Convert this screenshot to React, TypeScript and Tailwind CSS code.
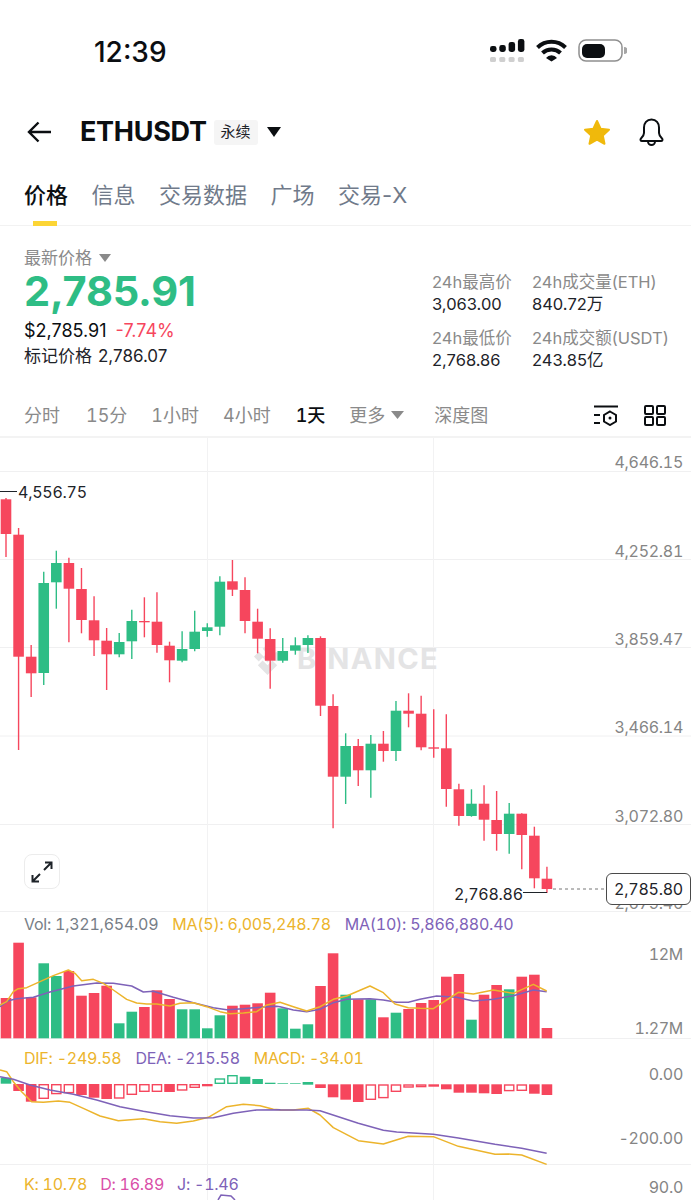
const RED = "#f6465d";
const GREEN = "#2ebd85";
const YELLOW = "#ecb42c";
const PURPLE = "#7e62b8";

const candleX = (i: number) => 6 + 12.58 * i;

// [bodyTop, bodyBottom, wickTop, wickBottom, up]
const candles: [number, number, number, number, boolean][] = [
  [499.3, 534, 498, 557, false],
  [534.7, 656.7, 528, 750, false],
  [656.7, 673.3, 645, 697, false],
  [583, 673, 571.7, 685, true],
  [563, 582.3, 550.7, 608.7, true],
  [563, 588.7, 557.7, 642.3, false],
  [589, 620, 568, 633.3, false],
  [620.3, 640.3, 596.3, 656, false],
  [640.7, 654.3, 628, 690, false],
  [642, 654.3, 633, 657.3, true],
  [621, 641.3, 609.7, 659, true],
  [621, 622.3, 597.3, 637.3, false],
  [621.7, 645, 592.3, 652.7, false],
  [645.7, 660.3, 641.7, 682.3, false],
  [649, 660.7, 631.3, 662.3, true],
  [631.7, 649, 610.7, 651.3, true],
  [627.3, 631, 623.3, 636.7, true],
  [581.7, 626.7, 576.3, 635.3, true],
  [581.3, 589.7, 560, 596, false],
  [590, 621, 577.3, 633.3, false],
  [621.7, 638.7, 608.7, 653.3, false],
  [639, 660.7, 628.3, 688.7, false],
  [651, 660.7, 638, 662.7, true],
  [645.3, 650.7, 637.3, 654.7, true],
  [638, 645, 635.3, 653, true],
  [638, 705.7, 636.3, 716, false],
  [706, 776.7, 694.3, 828.3, false],
  [746, 776.7, 733.3, 804, true],
  [746, 770.3, 739, 786, false],
  [743.7, 770.3, 735, 797.7, true],
  [743.7, 751, 731, 761.7, false],
  [710.7, 751, 701, 761, true],
  [710.7, 713.7, 693.3, 727.3, false],
  [713.7, 747.3, 695.7, 750.3, false],
  [747.3, 748.7, 709.3, 757.7, false],
  [748.3, 789, 714.3, 806.7, false],
  [789.3, 816, 783.7, 825.7, false],
  [803.7, 816, 789.3, 816.7, true],
  [803.7, 819.7, 785.3, 840.7, false],
  [820, 834, 791, 850.7, false],
  [813.7, 834, 803, 853.7, true],
  [813.7, 835, 813.3, 869.3, false],
  [835.7, 878.3, 826.7, 888.3, false],
  [878.7, 889, 866.7, 893, false],
];

// volume bar tops, page y
const volumeTops = [
  998, 942.7, 997.3, 963.3, 976, 971, 995.7, 993, 985.7, 1023.3, 1011.7, 1007, 990.3, 999, 1009.3, 1009.3, 1028.3,
  1015.3, 1005.7, 1004.7, 1003.3, 992.7, 1008.3, 1028.7, 1024.3, 986, 953.3, 994.7, 999.3, 999.3, 1017.3, 1012.7,
  1009, 1003, 1000, 976.7, 974, 1019.7, 994.7, 985, 989.3, 976.7, 974.7, 1028,
];

// macd histogram: [top, bottom, hollow]
const macd: [number, number, boolean][] = [
  [1077.7, 1083.7, false],
  [1084, 1091, false],
  [1084, 1101.7, false],
  [1084, 1099, true],
  [1084, 1094.3, true],
  [1084, 1093.3, true],
  [1084, 1095, false],
  [1084, 1097.7, false],
  [1084, 1099, false],
  [1084, 1098.7, true],
  [1084, 1095, true],
  [1084, 1092, true],
  [1084, 1092, true],
  [1084, 1092, false],
  [1084, 1090.7, true],
  [1084, 1088, true],
  [1084, 1086.3, false],
  [1078.3, 1084, true],
  [1075, 1084, true],
  [1076.7, 1084, false],
  [1079, 1084, false],
  [1082.7, 1084, false],
  [1083.3, 1084, false],
  [1083.3, 1084, false],
  [1082, 1084.7, false],
  [1084.3, 1088, false],
  [1084.3, 1097.3, false],
  [1084.3, 1099.7, false],
  [1084.3, 1102, false],
  [1084.3, 1100, true],
  [1084.3, 1098.3, true],
  [1084.3, 1092, true],
  [1084.3, 1087.7, true],
  [1084.3, 1087.3, true],
  [1084.3, 1086.7, true],
  [1084.3, 1089.3, false],
  [1084.3, 1092.7, false],
  [1084.3, 1092.7, false],
  [1084.3, 1093.3, false],
  [1084.3, 1094, false],
  [1084.3, 1091.3, true],
  [1084.3, 1091, true],
  [1084.3, 1093.7, false],
  [1084.3, 1095, false],
];

// traced points, in 3x crop coordinates
const line = (parts: [number, number, number[]][]) =>
  parts
    .flatMap(([ox, oy, p]) =>
      p.reduce<string[]>((acc, v, i) => {
        if (i % 2 === 0) acc.push(`${ox + v / 3},${oy + p[i + 1] / 3}`);
        return acc;
      }, [])
    )
    .join(" ");

const ma5 = line([
  [0, 910, [0, 285, 20, 275, 40, 245, 55, 236, 80, 233, 120, 215, 160, 197, 205, 180, 225, 190, 245, 212, 280, 208, 310, 220, 340, 240, 380, 268, 410, 279, 440, 282, 470, 282, 510, 288, 540, 280, 580, 278, 620, 290, 660, 305, 690, 311, 730, 309, 770, 305, 800, 285, 830, 279]],
  [280, 910, [0, 277, 40, 290, 80, 303, 120, 290, 160, 268, 200, 258, 270, 228, 310, 248, 345, 282, 385, 293, 420, 295, 460, 296, 500, 270, 535, 247, 580, 252, 640, 240, 700, 250, 760, 223, 800, 243]],
]);
const ma10 = line([
  [0, 910, [0, 290, 25, 272, 50, 266, 100, 262, 150, 246, 220, 228, 290, 219, 340, 220, 395, 228, 430, 246, 460, 244, 520, 262, 580, 278, 640, 293, 680, 299, 730, 296, 790, 291, 830, 289]],
  [280, 910, [0, 290, 40, 300, 80, 305, 120, 298, 160, 278, 200, 268, 270, 266, 310, 270, 350, 277, 385, 277, 420, 268, 470, 258, 530, 262, 580, 273, 640, 268, 700, 257, 760, 240, 800, 245]],
]);
const dif = line([
  [0, 1040, [0, 90, 20, 95, 40, 125, 65, 155, 95, 185, 130, 187, 175, 183, 210, 187, 250, 205, 300, 228, 355, 242, 430, 236, 480, 245, 530, 250, 580, 243, 625, 232, 680, 200, 730, 193, 780, 197, 820, 208, 840, 209]],
  [280, 1040, [0, 210, 40, 210, 85, 205, 120, 225, 160, 263, 235, 302, 310, 312, 385, 289, 460, 290, 535, 319, 645, 343, 685, 342, 725, 345, 800, 373]],
]);
const dea = line([
  [0, 1040, [0, 110, 40, 118, 90, 135, 150, 150, 220, 163, 290, 180, 360, 200, 430, 214, 510, 227, 580, 234, 640, 233, 700, 220, 770, 210, 840, 209]],
  [280, 1040, [0, 210, 80, 210, 120, 212, 235, 250, 310, 271, 350, 276, 460, 283, 535, 294, 645, 313, 725, 325, 800, 340]],
]);

function Grid({ ys }: { ys: number[] }) {
  return (
    <>
      {ys.map((y) => (
        <line key={y} x1={0} x2={691} y1={y} y2={y} stroke="#f0f0f1" strokeWidth={1} />
      ))}
      <line x1={207.5} x2={207.5} y1={0} y2={1200} stroke="#f2f2f3" strokeWidth={1} />
      <line x1={433.5} x2={433.5} y1={0} y2={1200} stroke="#f2f2f3" strokeWidth={1} />
    </>
  );
}

function AxisLabel({ y, children }: { y: number; children: React.ReactNode }) {
  return (
    <span className="absolute right-[8px] text-[16px] leading-[20px] tracking-[-0.3px] text-[#858585]" style={{ top: y - 10 }}>
      {children}
    </span>
  );
}

function StatusBar() {
  return (
    <div className="flex h-[100px] items-start justify-between pl-[94px] pr-[64px] pt-[35px]">
      <span className="text-[28px] font-medium leading-[34px] text-[#0b0e11]">12:39</span>
      <svg width={137} height={26} viewBox="0 0 137 26" className="mt-[3px]">
        {[
          [8, 6],
          [7, 7],
          [4, 10],
          [1, 13],
        ].map(([y, h], i) => (
          <g key={i}>
            <rect x={i * 9.3} y={y} width={6.5} height={h} rx={2.4} fill="#0b0e11" />
            <rect x={i * 9.3} y={19} width={6} height={5} rx={1.6} fill="#cfcfcf" />
          </g>
        ))}
        <path d="M47.500 9.500a20 20 0 0 1 28 0M52.500 15a13 13 0 0 1 18 0" fill="none" stroke="#0b0e11" strokeWidth={4} />
        <path d="M56 20a7 7 0 0 1 11 0l-5.500 3.500z" fill="#0b0e11" />
        <rect x={89} y={2} width={43} height={21} rx={7} fill="none" stroke="#8f8f8f" strokeWidth={1.5} />
        <rect x={92} y={6} width={23} height={14} rx={5} fill="#0b0e11" />
        <path d="M134 9a3.500 3.500 0 0 1 0 7z" fill="#a5a5a5" />
      </svg>
    </div>
  );
}

function Header() {
  return (
    <div className="flex h-[64px] items-center pl-[27px] pr-[26px]">
      <svg width={25} height={22} viewBox="0 0 25 22" fill="none" stroke="#0b0e11" strokeWidth={2.4}>
        <path d="M24 11H2M11.500 1.500 2 11l9.500 9.500" />
      </svg>
      <span className="ml-[28px] text-[27px] font-bold tracking-[-0.3px] text-[#0b0e11]">ETHUSDT</span>
      <span className="ml-[7px] flex h-[25px] w-[44px] items-center justify-center rounded-[3px] bg-[#f5f5f5] text-[15px] text-[#1e2329]">
        永续
      </span>
      <svg width={14} height={10} viewBox="0 0 14 10" className="ml-[9px]">
        <path d="M0 0h14L7 10z" fill="#0b0e11" />
      </svg>
      <svg width={28} height={27} viewBox="0 0 28 27" className="ml-auto">
        <path
          d="M14 2l3.600 7.700 8.400 1-6.200 5.700 1.700 8.400-7.500-4.200-7.500 4.200 1.700-8.400L2 10.700l8.400-1z"
          fill="#f0b90b"
          stroke="#f0b90b"
          strokeWidth={2}
          strokeLinejoin="round"
        />
      </svg>
      <svg width={27} height={29} viewBox="0 0 27 29" fill="none" stroke="#0b0e11" strokeWidth={2} className="ml-[27px]">
        <path d="M13.500 1.500c-4.800 0-7.500 3.800-7.500 8v5.500c0 2-1 3.500-3 5.500-1 1-.500 2.500 1 2.500h19c1.500 0 2-1.500 1-2.500-2-2-3-3.500-3-5.500V9.500c0-4.200-2.700-8-7.500-8z" strokeLinejoin="round" />
        <path d="M10 23.500a3.500 3.500 0 0 0 7 0" />
      </svg>
    </div>
  );
}

function Tabs() {
  const tabs = ["信息", "交易数据", "广场", "交易-X"];
  return (
    <div className="relative flex h-[62px] items-center gap-[23.500px] border-b border-[#f2f2f2] px-[24px] pt-[1px] text-[22px] text-[#707a8a]">
      <span className="font-medium text-[#0b0e11]">价格</span>
      {tabs.map((t) => (
        <span key={t}>{t}</span>
      ))}
      <span className="absolute bottom-[-1px] left-[33px] h-[5px] w-[24px] bg-[#fcd535]" />
    </div>
  );
}

function Stat({ label, value }: { label: string; value: string }) {
  return (
    <div className="flex flex-col whitespace-nowrap">
      <span className="text-[16.500px] leading-[22px] text-[#8a8a8a]">{label}</span>
      <span className="text-[16.500px] leading-[22px] text-[#1e2329]">{value}</span>
    </div>
  );
}

function PriceBlock() {
  return (
    <div className="flex h-[144px] justify-between pl-[24px] pr-[20px]">
      <div className="flex flex-col pt-[21px]">
        <div className="flex items-center text-[17px] leading-[22px] text-[#8a8a8a]">
          最新价格
          <svg width={12} height={8} viewBox="0 0 12 8" className="ml-[7px]">
            <path d="M0 0h12L6 8z" fill="#8a8a8a" />
          </svg>
        </div>
        <span className="mt-[-3px] text-[41.500px] font-bold leading-[50px] tracking-[-0.2px] text-[#2ebd85]">2,785.91</span>
        <div className="mt-[4px] flex gap-[9px] text-[18px] leading-[22px]">
          <span className="text-[#0b0e11]">$2,785.91</span>
          <span className="text-[#f6465d]">-7.74%</span>
        </div>
        <div className="mt-[3px] flex gap-[6px] text-[17px] leading-[22px] text-[#1e2329]">
          <span>标记价格</span>
          <span>2,786.07</span>
        </div>
      </div>
      <div className="grid grid-cols-[100px_139px] content-start gap-y-[12px] pt-[45px]">
        <Stat label="24h最高价" value="3,063.00" />
        <Stat label="24h成交量(ETH)" value="840.72万" />
        <Stat label="24h最低价" value="2,768.86" />
        <Stat label="24h成交额(USDT)" value="243.85亿" />
      </div>
    </div>
  );
}

function Intervals() {
  return (
    <div className="flex h-[68px] items-center border-b-2 border-[#f3f3f3] pl-[24px] pr-[25px] pt-[24px] text-[18px] text-[#8a8a8a] tabular-nums">
      <span>分时</span>
      <span className="ml-[26px]">15分</span>
      <span className="ml-[24px]">1小时</span>
      <span className="ml-[24px]">4小时</span>
      <span className="ml-[25px] font-medium text-[#0b0e11]">1天</span>
      <span className="ml-[24px]">更多</span>
      <svg width={13} height={8} viewBox="0 0 13 8" className="ml-[6px]">
        <path d="M0 0h13L6.500 8z" fill="#8a8a8a" />
      </svg>
      <span className="ml-[30px]">深度图</span>
      <svg width={24} height={21} viewBox="0 0 24 21" fill="none" stroke="#0b0e11" strokeWidth={2} className="ml-auto">
        <path d="M0 1.500h24M0 10h6M0 18h6" />
        <path d="M16 6.500l6 3.500v6.500L16 20l-6-3.500V10z" />
        <circle cx={16} cy={13} r={1.500} fill="#0b0e11" stroke="none" />
      </svg>
      <svg width={22} height={21} viewBox="0 0 22 21" fill="none" stroke="#0b0e11" strokeWidth={2} className="ml-[26px]">
        <rect x={1} y={1} width={8} height={8} rx={1} />
        <rect x={13} y={1} width={8} height={8} rx={1} />
        <rect x={1} y={12} width={8} height={8} rx={1} />
        <rect x={13} y={12} width={8} height={8} rx={1} />
      </svg>
    </div>
  );
}

function MainChart() {
  return (
    <div className="relative h-[474px] tabular-nums">
      <svg viewBox="0 438 691 474" className="absolute inset-0 h-full w-full">
        <Grid ys={[471.5, 559.5, 647.5, 736, 824.5, 911.5]} />
      </svg>
      {/* watermark sits under the candles */}
      <div className="absolute left-[252px] top-[203px] flex items-center gap-[14px] text-[#e4e4e5]">
        <svg width={31} height={31} viewBox="0 0 32 32" fill="currentColor">
          <path d="M16 0l5 5-5 5-5-5zM7 8l5 5-5 5-5-5zM25 8l5 5-5 5-5-5zM16 9l5 5-5 5-5-5zM16 22l5-5 5 5-10 10-10-10 5-5z" />
        </svg>
        <span className="text-[29px] font-bold leading-[36px] tracking-[1.4px]">BINANCE</span>
      </div>
      <svg viewBox="0 438 691 474" className="absolute inset-0 h-full w-full">
        {candles.map(([top, bottom, wt, wb, up], i) => {
          const x = candleX(i);
          const c = up ? GREEN : RED;
          return (
            <g key={i}>
              <line x1={x} x2={x} y1={wt} y2={wb} stroke={c} strokeWidth={1.4} />
              <rect x={x - 5.3} y={top} width={10.6} height={bottom - top} fill={c} />
            </g>
          );
        })}
        <line x1={0} x2={17} y1={491.500} y2={491.500} stroke="#1e2329" strokeWidth={1} />
        <line x1={523} x2={547} y1={892.500} y2={892.500} stroke="#1e2329" strokeWidth={1} />
        <line x1={553} x2={606} y1={889} y2={889} stroke="#777" strokeWidth={1} strokeDasharray="3 3" />
      </svg>
      <span className="absolute left-[18px] top-[44px] text-[16px] leading-[20px] tracking-[-0.25px] text-[#1e2329]">4,556.75</span>
      <span className="absolute left-[454px] top-[446px] text-[16px] leading-[20px] tracking-[-0.25px] text-[#1e2329]">2,768.86</span>
      <AxisLabel y={24}>4,646.15</AxisLabel>
      <AxisLabel y={113}>4,252.81</AxisLabel>
      <AxisLabel y={201}>3,859.47</AxisLabel>
      <AxisLabel y={289}>3,466.14</AxisLabel>
      <AxisLabel y={378}>3,072.80</AxisLabel>
      <AxisLabel y={465}>2,679.46</AxisLabel>
      <div className="absolute left-[606px] top-[435px] flex h-[32px] w-[85px] items-center justify-center rounded-[6px] border border-[#4a4a4a] bg-white text-[16px] tracking-[-0.25px] text-[#1e2329]">
        2,785.80
      </div>
      <div className="absolute left-[24px] top-[416px] flex h-[35px] w-[36px] items-center justify-center rounded-[8px] border border-[#ececec] bg-white">
        <svg width={22} height={22} viewBox="0 0 22 22" fill="none" stroke="#1e2329" strokeWidth={2}>
          <path d="M14 1.500h6.500V8M20.500 1.500l-7.500 7.500M8 20.500H1.500V14M1.500 20.500 9 13" />
        </svg>
      </div>
    </div>
  );
}

function VolumeChart() {
  return (
    <div className="relative h-[127px] tabular-nums">
      <svg viewBox="0 912 691 127" className="absolute inset-0 h-full w-full">
        <Grid ys={[1038.500]} />
        {volumeTops.map((top, i) => (
          <rect key={i} x={candleX(i) - 5.3} y={top} width={10.6} height={1038.300 - top} fill={candles[i][4] ? GREEN : RED} />
        ))}
        <polyline points={ma10} fill="none" stroke={PURPLE} strokeWidth={1.500} strokeLinejoin="round" />
        <polyline points={ma5} fill="none" stroke={YELLOW} strokeWidth={1.500} strokeLinejoin="round" />
      </svg>
      <div className="relative flex gap-[14px] pl-[24px] pt-[2px] text-[16px] leading-[20px] tracking-[-0.25px]">
        <span className="text-[#777e87]">Vol: 1,321,654.09</span>
        <span className="text-[#ecb42c]">MA(5): 6,005,248.78</span>
        <span className="text-[#7e62b8]">MA(10): 5,866,880.40</span>
      </div>
      <AxisLabel y={42}>12M</AxisLabel>
      <AxisLabel y={116}>1.27M</AxisLabel>
    </div>
  );
}

function MacdChart() {
  return (
    <div className="relative h-[126px] tabular-nums">
      <svg viewBox="0 1039 691 126" className="absolute inset-0 h-full w-full">
        <Grid ys={[1164.500]} />
        {macd.map(([top, bottom, hollow], i) => {
          const x = candleX(i) - 5.3;
          const c = (i >= 17 && i <= 24) || i === 0 ? GREEN : RED;
          return hollow ? (
            <rect key={i} x={x + 0.7} y={top + 0.7} width={9.2} height={bottom - top - 1.4} fill="#fff" stroke={c} strokeWidth={1.400} />
          ) : (
            <rect key={i} x={x} y={top} width={10.6} height={bottom - top} fill={c} />
          );
        })}
        <polyline points={dif} fill="none" stroke={YELLOW} strokeWidth={1.500} strokeLinejoin="round" />
        <polyline points={dea} fill="none" stroke={PURPLE} strokeWidth={1.500} strokeLinejoin="round" />
      </svg>
      <div className="relative flex gap-[14px] pl-[24px] pt-[9px] text-[16px] leading-[20px] tracking-[-0.25px]">
        <span className="text-[#ecb42c]">DIF: -249.58</span>
        <span className="text-[#7e62b8]">DEA: -215.58</span>
        <span className="text-[#ecb42c]">MACD: -34.01</span>
      </div>
      <AxisLabel y={35}>0.00</AxisLabel>
      <AxisLabel y={99}>-200.00</AxisLabel>
    </div>
  );
}

function KdjChart() {
  return (
    <div className="relative h-[35px] tabular-nums">
      <svg viewBox="0 1165 691 35" className="absolute inset-0 h-full w-full">
        <Grid ys={[]} />
        <path d="M218 1200l3-5 10 1 4 4" fill="none" stroke={PURPLE} strokeWidth={1.500} />
      </svg>
      <div className="relative flex gap-[13px] pl-[24px] pt-[9px] text-[16px] leading-[20px] tracking-[-0.25px]">
        <span className="text-[#ecb42c]">K: 10.78</span>
        <span className="text-[#d94fa8]">D: 16.89</span>
        <span className="text-[#7e62b8]">J: -1.46</span>
      </div>
      <AxisLabel y={22}>90.0</AxisLabel>
    </div>
  );
}

export default function App() {
  return (
    <div className="h-[1200px] w-[691px] overflow-hidden bg-white font-['Inter','Noto_Sans_CJK_SC',sans-serif]">
      <StatusBar />
      <Header />
      <Tabs />
      <PriceBlock />
      <Intervals />
      <MainChart />
      <VolumeChart />
      <MacdChart />
      <KdjChart />
    </div>
  );
}
